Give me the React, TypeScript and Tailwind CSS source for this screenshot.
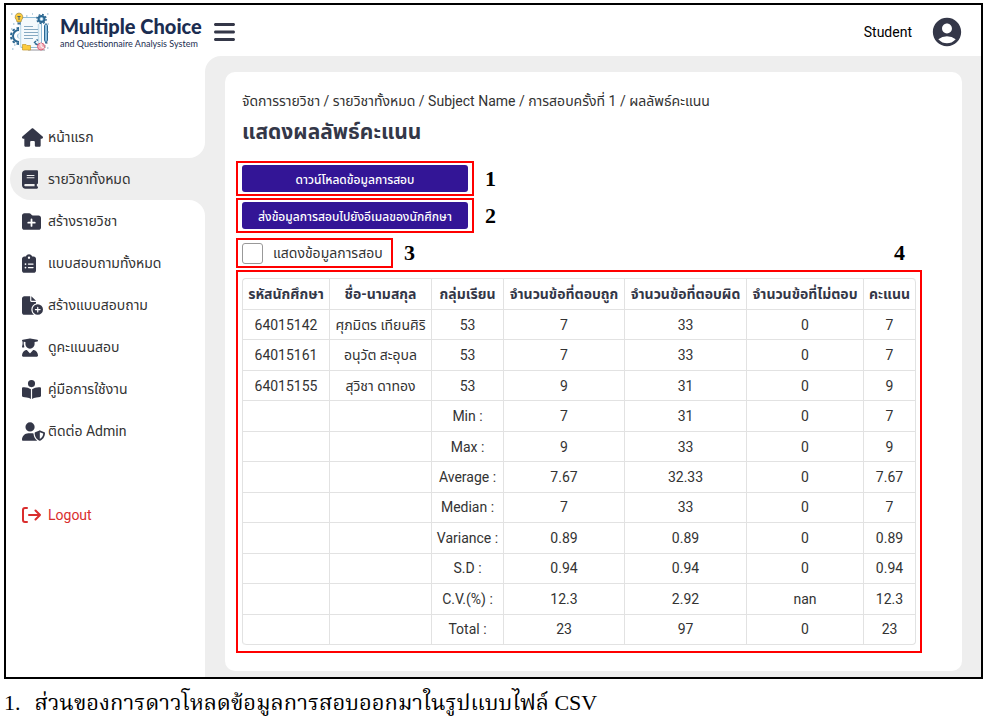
import type { ReactNode } from "react";
import type { IconType } from "react-icons";
import {
  FaBars,
  FaBook,
  FaBookOpenReader,
  FaClipboardList,
  FaFileCirclePlus,
  FaFolderPlus,
  FaHouse,
  FaUserGraduate,
  FaUserShield,
} from "react-icons/fa6";
import { MdAccountCircle } from "react-icons/md";

type NavEntry = { label: string; icon: IconType; width: string };

const home: NavEntry = { label: "หน้าแรก", icon: FaHouse, width: "w-[21px]" };
const courses: NavEntry = { label: "รายวิชาทั้งหมด", icon: FaBook, width: "w-4" };
const tools: NavEntry[] = [
  { label: "สร้างรายวิชา", icon: FaFolderPlus, width: "w-[19px]" },
  { label: "แบบสอบถามทั้งหมด", icon: FaClipboardList, width: "w-[14px]" },
  { label: "สร้างแบบสอบถาม", icon: FaFileCirclePlus, width: "w-[21px]" },
  { label: "ดูคะแนนสอบ", icon: FaUserGraduate, width: "w-4" },
  { label: "คู่มือการใช้งาน", icon: FaBookOpenReader, width: "w-[19px]" },
  { label: "ติดต่อ Admin", icon: FaUserShield, width: "w-[23px]" },
];

const columns = [
  "รหัสนักศึกษา",
  "ชื่อ-นามสกุล",
  "กลุ่มเรียน",
  "จำนวนข้อที่ตอบถูก",
  "จำนวนข้อที่ตอบผิด",
  "จำนวนข้อที่ไม่ตอบ",
  "คะแนน",
];

const rows = [
  ["64015142", "ศุภมิตร เทียนศิริ", "53", "7", "33", "0", "7"],
  ["64015161", "อนุวัต สะอุบล", "53", "7", "33", "0", "7"],
  ["64015155", "สุวิชา ดาทอง", "53", "9", "31", "0", "9"],
  ["", "", "Min :", "7", "31", "0", "7"],
  ["", "", "Max :", "9", "33", "0", "9"],
  ["", "", "Average :", "7.67", "32.33", "0", "7.67"],
  ["", "", "Median :", "7", "33", "0", "7"],
  ["", "", "Variance :", "0.89", "0.89", "0", "0.89"],
  ["", "", "S.D :", "0.94", "0.94", "0", "0.94"],
  ["", "", "C.V.(%) :", "12.3", "2.92", "nan", "12.3"],
  ["", "", "Total :", "23", "97", "0", "23"],
];

function Logo() {
  return (
    <svg viewBox="0 0 40 40" className="h-10 w-10 shrink-0" fill="none" aria-hidden="true">
      <path d="M18 37h17v2H18z" fill="#c9c9cd" />
      <path d="M33 33h3v3h-3zM36 30h2v2h-2z" fill="#c9c9cd" />
      <rect x="10.500" y="5.500" width="21" height="30" rx="1.500" fill="#f4f9fc" stroke="#8fbbd6" />
      <path d="M10.500 13v22.500M28.500 12v20" stroke="#c3ddec" strokeWidth="1.500" />
      <path d="M14 14.500h9M14 17.500h14M14 20.500h14M14 23.500h14M14 26.500h9" stroke="#86a9c2" strokeWidth="1.200" />
      <path d="M9 18a6 6 0 0 0 0 12" stroke="#2c6791" strokeWidth="2" />
      <path d="M9 16a8 8 0 0 0 0 16" stroke="#2c6791" strokeWidth="2" strokeDasharray="2.500 2" />
      <path d="M9 21.500a3 3 0 0 0 0 5" stroke="#7fb2d2" />
      <circle cx="31.500" cy="7" r="3" fill="#8fc0de" stroke="#2c6791" strokeWidth="2" />
      <circle cx="31.500" cy="7" r="4.600" stroke="#2c6791" strokeWidth="1.400" strokeDasharray="1.800 1.810" />
      <circle cx="31.500" cy="7" r="1.200" fill="#fff" />
      <path d="M9 1a4 4 0 0 1 2.500 7l-.5 2H7l-.5-2A4 4 0 0 1 9 1Z" fill="#fccb3d" stroke="#8d7a35" strokeWidth=".6" />
      <path d="M7.500 4.500h3M9 4.500V8" stroke="#45606f" />
      <path d="M7.500 10.500h3v2h-3z" fill="#3f6f92" />
      <path d="M34.500 13.500l1.500-2 1.500 2V28L36 31.500 34.500 28z" fill="#8fc0de" stroke="#2c6791" />
      <path d="M12.500 32.500H16l1 1h3.500V38h-8z" fill="#fccb3d" stroke="#c49a2b" strokeWidth=".7" />
      <path d="M24 31l2-2M25 31.500l3 1.500M26.500 27.500l1.500 1" stroke="#2c6791" strokeWidth="1.500" />
      <circle cx="31" cy="34.500" r="3.500" fill="#f6b3bb" stroke="#d9647c" />
      <path d="M31 34.500V31M31 34.500l3 1.500" stroke="#fff" />
      <path
        d="M1 2h1.500M16 4h1.500M1 17h1.500M3 12h1.500M37.500 12h1.500M37.500 20h1.500M2 37h1.500M37 36h1.500M37 2h1.500M4 33h1.500M22 2h1"
        stroke="#7faac6"
        strokeWidth="1.200"
      />
    </svg>
  );
}

function LogoutIcon() {
  return (
    <svg
      viewBox="0 0 20 16"
      className="h-4 w-5"
      fill="none"
      stroke="currentColor"
      strokeWidth="2"
      strokeLinecap="round"
      strokeLinejoin="round"
      aria-hidden="true"
    >
      <path d="M5 1H3a2 2 0 0 0-2 2v10a2 2 0 0 0 2 2h2M7 8h11M13.500 3.500L18 8l-4.500 4.500" />
    </svg>
  );
}

function NavItem({ entry, current = false }: { entry: NavEntry; current?: boolean }) {
  const Icon = entry.icon;
  return (
    <a
      href="#"
      aria-current={current ? "page" : undefined}
      className="flex h-[42px] items-center pl-3 text-[#333] whitespace-nowrap"
    >
      <span className="w-[26px] shrink-0">
        <Icon className={`h-[19px] text-[#343748] ${entry.width}`} />
      </span>
      {entry.label}
    </a>
  );
}

function Mark({ children }: { children: ReactNode }) {
  return (
    <b className="font-['Liberation_Serif',serif] text-[22px] leading-6 text-black">{children}</b>
  );
}

function Marked({ n, className, children }: { n: string; className: string; children: ReactNode }) {
  return (
    <div className="flex items-center gap-[11px]">
      <div className={`flex items-center border-2 border-[#ff0000] ${className}`}>{children}</div>
      <Mark>{n}</Mark>
    </div>
  );
}

function ActionButton({ children }: { children: ReactNode }) {
  return (
    <button
      type="button"
      className="h-[27px] grow rounded-[3px] bg-[#331596] pt-[2px] text-xs font-medium whitespace-nowrap text-white"
    >
      {children}
    </button>
  );
}

export default function App() {
  return (
    <div className="bg-white px-1 pt-[3px] font-[Roboto,'Noto_Sans','Noto_Sans_Thai',sans-serif] text-sm text-[#333]">
      <div className="mr-[-2px] border-2 border-black bg-white">
        <header className="flex h-[51px] items-center pt-[2px] pr-[17px] pl-1">
          <Logo />
          <div className="ml-[10px] w-[142px] font-[Lato,sans-serif] whitespace-nowrap text-[#1b2d51]">
            <div className="text-[20px] leading-6 font-black">Multiple Choice</div>
            <div className="text-[9px] leading-[11px]">and Questionnaire Analysis System</div>
          </div>
          <button type="button" aria-label="Menu" className="ml-3 text-[#343748]">
            <FaBars className="h-6 w-[21px]" />
          </button>
          <span className="ml-auto text-black">Student</span>
          <button type="button" aria-label="Account" className="ml-[18px] text-[#343748]">
            <MdAccountCircle className="h-[34px] w-[34px]" />
          </button>
        </header>

        <div className="flex bg-white">
          <nav className="flex w-[199px] shrink-0 flex-col bg-[#eee]">
            <div className="bg-[#eee]">
              <div className="rounded-br-2xl bg-white pt-[60px] pl-1">
                <NavItem entry={home} />
              </div>
            </div>
            <div className="bg-white pl-1">
              <div className="rounded-l-full bg-[#eee]">
                <NavItem entry={courses} current />
              </div>
            </div>
            <div className="grow rounded-tr-2xl bg-white pl-1">
              {tools.map((entry) => (
                <NavItem key={entry.label} entry={entry} />
              ))}
              <button type="button" className="mt-[42px] flex h-[42px] items-center pl-3 text-[#d92d2d]">
                <span className="w-[26px]">
                  <LogoutIcon />
                </span>
                Logout
              </button>
            </div>
          </nav>

          <main className="grow rounded-tl-2xl bg-[#eee] pt-4 pr-[19px] pb-[6px] pl-5">
            <section className="rounded-[10px] bg-white px-[11px] pt-[17px] pb-[18px]">
              <div className="pl-[6px]">
                <div className="leading-6">
                  จัดการรายวิชา / รายวิชาทั้งหมด / Subject Name / การสอบครั้งที่ 1 / ผลลัพธ์คะแนน
                </div>
                <h1 className="mt-[3px] text-[21px] leading-8 font-bold text-[#343748]">แสดงผลลัพธ์คะแนน</h1>
              </div>

              <div className="mt-[13px] flex flex-col gap-[2px]">
                <Marked n="1" className="h-[35px] w-[238px] px-1">
                  <ActionButton>ดาวน์โหลดข้อมูลการสอบ</ActionButton>
                </Marked>
                <Marked n="2" className="h-[35px] w-[238px] px-1">
                  <ActionButton>ส่งข้อมูลการสอบไปยังอีเมลของนักศึกษา</ActionButton>
                </Marked>
              </div>

              <div className="mt-[5px] flex items-center justify-between pr-[46px]">
                <Marked n="3" className="h-[30px] w-[157px] pl-1">
                  <label className="flex items-center gap-[10px] whitespace-nowrap">
                    <input type="checkbox" className="h-[21px] w-[21px] shrink-0 appearance-none rounded-[3px] border border-[#999] bg-white" />
                    แสดงข้อมูลการสอบ
                  </label>
                </Marked>
                <Mark>4</Mark>
              </div>

              <div className="mt-[2px] w-[686px] border-2 border-[#ff0000] px-1 py-[6px]">
                <table className="h-[367px] w-full table-fixed border-separate border-spacing-0 rounded-[4px] border-t border-l border-[#e2e2e2] text-center">
                  <colgroup>
                    <col className="w-[87px]" />
                    <col className="w-[102px]" />
                    <col className="w-[72px]" />
                    <col className="w-[121px]" />
                    <col className="w-[122px]" />
                    <col className="w-[117px]" />
                    <col />
                  </colgroup>
                  <thead>
                    <tr className="h-[31px]">
                      {columns.map((c) => (
                        <th key={c} scope="col" className="border-r border-b border-[#e2e2e2] p-0 leading-5 font-bold whitespace-nowrap text-[#343748] last:rounded-tr-[4px]">
                          {c}
                        </th>
                      ))}
                    </tr>
                  </thead>
                  <tbody>
                    {rows.map((row, i) => (
                      <tr key={i} className="group">
                        {row.map((cell, j) => (
                          <td key={j} className="border-r border-b border-[#e2e2e2] p-0 leading-5 whitespace-nowrap group-last:first:rounded-bl-[4px] group-last:last:rounded-br-[4px]">
                            {cell}
                          </td>
                        ))}
                      </tr>
                    ))}
                  </tbody>
                </table>
              </div>
            </section>
          </main>
        </div>
      </div>
      <p className="flex items-baseline gap-[14px] pt-[10px] font-['Liberation_Serif','Noto_Serif_Thai',serif] text-[22px] leading-7 whitespace-nowrap text-black">
        <span>1.</span>
        <span>ส่วนของการดาวโหลดข้อมูลการสอบออกมาในรูปแบบไฟล์ CSV</span>
      </p>
    </div>
  );
}
